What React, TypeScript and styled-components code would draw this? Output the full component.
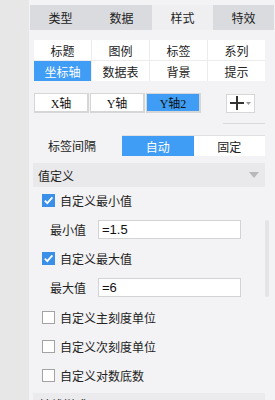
import React from "react";
import styled, { createGlobalStyle } from "styled-components";

const Global = createGlobalStyle`
  html, body { margin: 0; padding: 0; }
  body {
    background: #e7e7e7;
    font-family: "Noto Sans CJK SC", "Noto Sans", sans-serif;
    font-size: 12px;
    color: #222;
  }
`;

const Page = styled.div`
  display: flex;
  width: 275px;
  height: 400px;
  overflow: hidden;
`;

const Strip = styled.div`
  width: 29px;
  flex: none;
  background: #e7e7e7;
`;

const Panel = styled.div`
  position: relative;
  flex: 1;
  background: #f3f3f5;
  padding: 5px 0 0 1px;
  display: flex;
  flex-direction: column;
  & > * { flex-shrink: 0; }
`;

const TabBar = styled.div`
  display: grid;
  grid-template-columns: repeat(4, 61px);
  height: 25px;
`;

const Tab = styled.div<{ $active?: boolean }>`
  display: flex;
  align-items: center;
  justify-content: center;
  background: ${(p) => (p.$active ? "#efeff1" : "#dadbde")};
  color: #222;
  font-size: 12px;
`;

const SubGrid = styled.div`
  margin: 10px 10px 0 4px;
  display: grid;
  grid-template-columns: repeat(4, 1fr);
  grid-auto-rows: 20px;
  gap: 1px;
  background: #ececee;
`;

const SubCell = styled.div<{ $active?: boolean }>`
  display: flex;
  align-items: center;
  justify-content: center;
  background: ${(p) => (p.$active ? "#3f9df5" : "#ffffff")};
  color: ${(p) => (p.$active ? "#ffffff" : "#222")};
`;

const AxisRow = styled.div`
  margin: 12px 10px 0 4px;
  display: flex;
  align-items: center;
  height: 20px;
`;

const AxisBtn = styled.div<{ $active?: boolean }>`
  width: 55px;
  height: 20px;
  box-sizing: border-box;
  margin-right: 1px;
  border: 1px solid #d6d6d6;
  border-width: 1px 2px 2px 1px;
  background: ${(p) => (p.$active ? "#3f9df5" : "#ffffff")};
  display: flex;
  align-items: center;
  justify-content: center;
  font-family: "Liberation Serif", "Noto Sans CJK SC", serif;
  font-size: 12px;
  color: #111;
`;

const PlusBtn = styled.div`
  margin-left: auto;
  margin-right: 10px;
  width: 29px;
  height: 19px;
  box-sizing: border-box;
  border: 1px solid #d6d6d6;
  background: #ffffff;
  display: flex;
  align-items: center;
  justify-content: center;
`;

const RuleRow = styled.div`
  display: flex;
  justify-content: flex-end;
  margin: 10px 10px 0 0;
`;

const Rule = styled.div`
  width: 42px;
  height: 1px;
  background: #d9d9db;
`;

const IntervalRow = styled.div`
  margin: 11px 10px 0 0;
  display: flex;
  align-items: center;
  height: 21px;
`;

const IntervalLabel = styled.div`
  width: 74px;
  padding-left: 18px;
`;

const Segment = styled.div`
  display: flex;
  flex: 1;
  height: 21px;
  border-top: 1px solid #e0e0e2;
  box-sizing: border-box;
`;

const SegItem = styled.div<{ $active?: boolean }>`
  flex: 1;
  display: flex;
  align-items: center;
  justify-content: center;
  background: ${(p) => (p.$active ? "#3f9df5" : "#ffffff")};
  color: ${(p) => (p.$active ? "#ffffff" : "#222")};
`;

const SectionHeader = styled.div`
  margin: 7px 10px 0 3px;
  height: 24px;
  background: #e9e9eb;
  display: flex;
  align-items: center;
  justify-content: space-between;
  padding: 0 6px 0 5px;
`;

const CheckRow = styled.div<{ $h: number }>`
  height: ${(p) => p.$h}px;
  display: flex;
  align-items: center;
  padding-left: 12px;
  gap: 5px;
`;

const Box = styled.div<{ $checked?: boolean }>`
  width: 13px;
  height: 13px;
  box-sizing: border-box;
  border: 1px solid ${(p) => (p.$checked ? "#3a8fe8" : "#a3a3a3")};
  background: ${(p) => (p.$checked ? "#3a8fe8" : "#ffffff")};
  display: flex;
  align-items: center;
  justify-content: center;
`;

const InputRow = styled.div<{ $h: number }>`
  height: ${(p) => p.$h}px;
  display: flex;
  align-items: center;
  padding-left: 20px;
`;

const InputLabel = styled.div`
  width: 48px;
`;

const Field = styled.div`
  width: 143px;
  height: 19px;
  box-sizing: border-box;
  border: 1px solid #d3d3d5;
  background: #ffffff;
  display: flex;
  align-items: center;
  padding-left: 3px;
  font-family: "Liberation Sans", Arial, sans-serif;
  font-size: 13px;
  color: #111;
`;

const BottomHeader = styled.div`
  margin: 3px 10px 0 3px;
  height: 24px;
  background: #ebebed;
  padding: 4px 0 0 6px;
  box-sizing: border-box;
  line-height: 16px;
`;

const ScrollThumb = styled.div`
  position: absolute;
  left: 236px;
  top: 220px;
  width: 4px;
  height: 77px;
  border-radius: 2px;
  background: #e4e4e6;
`;

const Check = () => (
  <svg width="11" height="11" viewBox="0 0 11 11">
    <path d="M1.8 5.6 L4.3 8.2 L9.4 2.4" stroke="#fff" strokeWidth="1.8" fill="none" />
  </svg>
);

const Caret = () => (
  <svg width="10" height="6" viewBox="0 0 10 6">
    <path d="M0 0 L10 0 L5 6 Z" fill="#b8b8ba" />
  </svg>
);

const Plus = () => (
  <svg width="22" height="14" viewBox="0 0 22 14">
    <rect x="0" y="6" width="14" height="2" fill="#333" />
    <rect x="6" y="0" width="2" height="14" fill="#333" />
    <path d="M16 6 L21 6 L18.5 9 Z" fill="#999" />
  </svg>
);

export default function App() {
  const tabs = ["类型", "数据", "样式", "特效"];
  const subs = ["标题", "图例", "标签", "系列", "坐标轴", "数据表", "背景", "提示"];
  return (
    <Page>
      <Global />
      <Strip />
      <Panel>
        <TabBar>
          {tabs.map((t) => (
            <Tab key={t} $active={t === "样式"}>
              {t}
            </Tab>
          ))}
        </TabBar>
        <SubGrid>
          {subs.map((s) => (
            <SubCell key={s} $active={s === "坐标轴"}>
              {s}
            </SubCell>
          ))}
        </SubGrid>
        <AxisRow>
          <AxisBtn>X轴</AxisBtn>
          <AxisBtn>Y轴</AxisBtn>
          <AxisBtn $active>Y轴2</AxisBtn>
          <PlusBtn>
            <Plus />
          </PlusBtn>
        </AxisRow>
        <RuleRow>
          <Rule />
        </RuleRow>
        <IntervalRow>
          <IntervalLabel>标签间隔</IntervalLabel>
          <Segment>
            <SegItem $active>自动</SegItem>
            <SegItem>固定</SegItem>
          </Segment>
        </IntervalRow>
        <SectionHeader>
          <span>值定义</span>
          <Caret />
        </SectionHeader>
        <CheckRow $h={26}>
          <Box $checked>
            <Check />
          </Box>
          <span>自定义最小值</span>
        </CheckRow>
        <InputRow $h={32}>
          <InputLabel>最小值</InputLabel>
          <Field>=1.5</Field>
        </InputRow>
        <CheckRow $h={26}>
          <Box $checked>
            <Check />
          </Box>
          <span>自定义最大值</span>
        </CheckRow>
        <InputRow $h={32}>
          <InputLabel>最大值</InputLabel>
          <Field>=6</Field>
        </InputRow>
        <CheckRow $h={29}>
          <Box />
          <span>自定义主刻度单位</span>
        </CheckRow>
        <CheckRow $h={29}>
          <Box />
          <span>自定义次刻度单位</span>
        </CheckRow>
        <CheckRow $h={29}>
          <Box />
          <span>自定义对数底数</span>
        </CheckRow>
        <BottomHeader>轴线样式</BottomHeader>
        <ScrollThumb />
      </Panel>
    </Page>
  );
}
